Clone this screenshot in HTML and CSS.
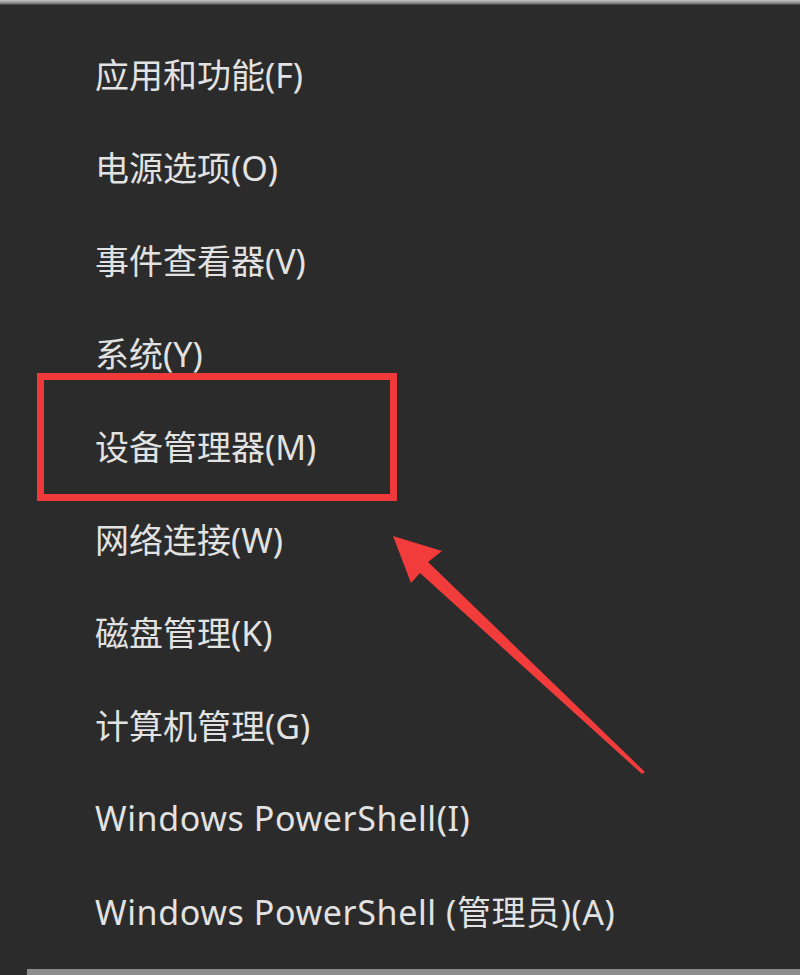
FILE: index.html
```html
<!DOCTYPE html>
<html lang="zh-CN">
<head>
    <meta charset="UTF-8">
    <title>快速链接菜单</title>
    <link rel="stylesheet" href="styles.css">
</head>
<body>
    <div class="screen">
        <div class="top-edge"></div>
        <ul class="menu">
            <li>应用和功能(F)</li>
            <li>电源选项(O)</li>
            <li>事件查看器(V)</li>
            <li>系统(Y)</li>
            <li>设备管理器(M)</li>
            <li>网络连接(W)</li>
            <li>磁盘管理(K)</li>
            <li>计算机管理(G)</li>
            <li class="latin">Windows PowerShell(I)</li>
            <li class="latin">Windows PowerShell (管理员)(A)</li>
        </ul>
        <div class="bottom-edge"></div>

        <div class="highlight"></div>
        <svg class="arrow" width="800" height="975" viewBox="0 0 800 975">
            <polygon points="393,536 442,551 428,562 645,772 642,774 420,573 411,583" fill="#f23c3c"/>
        </svg>
    </div>
</body>
</html>
```

FILE: styles.css
```css
html, body {
    margin: 0;
    padding: 0;
    background-color: #2b2b2b;
}
.screen {
    position: relative;
    width: 800px;
    height: 975px;
    overflow: hidden;
    background-color: #2b2b2b;
    display: flex;
    flex-direction: column;
}
.top-edge {
    height: 5px;
    background: linear-gradient(#c8c8c8, #8a8a8a 60%, #3a3a3a);
}
.menu {
    list-style: none;
    margin: 0;
    padding: 22px 0 0 0;
    flex: 1;
}
.menu li {
    height: 93px;
    display: flex;
    align-items: center;
    padding-left: 95px;
    font-family: "Noto Sans", "Noto Sans CJK SC", sans-serif;
    font-size: 34px;
    color: #e2e2e2;
    white-space: nowrap;
}
.menu li.latin {
    letter-spacing: 0.6px;
}
.bottom-edge {
    height: 6px;
    margin-left: 27px;
    background-color: #8c8c8c;
}
.highlight {
    position: absolute;
    left: 37px;
    top: 373px;
    width: 346px;
    height: 114px;
    border: 7px solid #f03a3a;
}
.arrow {
    position: absolute;
    left: 0;
    top: 0;
}
```
